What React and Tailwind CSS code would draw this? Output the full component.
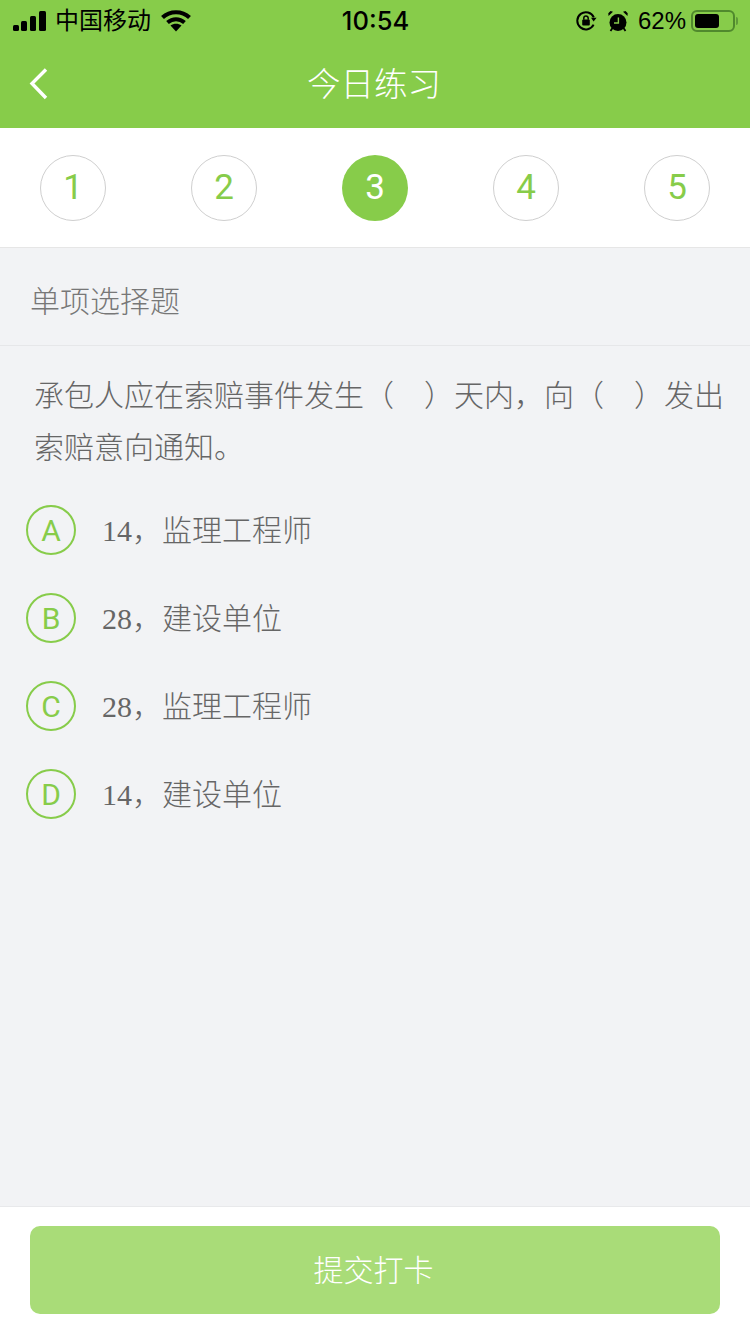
const steps = [1, 2, 3, 4, 5];
const current = 3;

const options = [
  { key: "A", num: "14", text: "监理工程师" },
  { key: "B", num: "28", text: "建设单位" },
  { key: "C", num: "28", text: "监理工程师" },
  { key: "D", num: "14", text: "建设单位" },
];

const cjk = "font-['Liberation_Sans','Noto_Sans_CJK_SC',sans-serif]";

const SignalIcon = () => (
  <svg width="34" height="22" viewBox="0 0 34 22" className="block">
    <rect x="0" y="15" width="6" height="6" rx="1.5" fill="#000" />
    <rect x="8" y="11" width="6" height="10" rx="1.5" fill="#000" />
    <rect x="17" y="6" width="6" height="15" rx="1.5" fill="#000" />
    <rect x="26" y="1" width="7" height="20" rx="1.5" fill="#000" />
  </svg>
);

const WifiIcon = () => (
  <svg width="30" height="22" viewBox="0 0 30 22" className="block">
    <path d="M1.500 7.500C9 .5 21 .5 28.500 7.500" fill="none" stroke="#000" strokeWidth="4.200" />
    <path d="M6.500 12.500c5-4.400 12-4.400 17 0" fill="none" stroke="#000" strokeWidth="4" />
    <path d="M9.500 15.600c3.200-2.400 7.800-2.400 11 0L15 21.500z" fill="#000" />
  </svg>
);

const LockRotateIcon = () => (
  <svg width="21" height="20" viewBox="0 0 21 20" className="block">
    <path d="M17.600 13.600A8.600 8.600 0 1 1 17.800 6.400" fill="none" stroke="#000" strokeWidth="2" />
    <path d="M15 6.800h5.600L17.600 10.600z" fill="#000" />
    <rect x="6.200" y="8.600" width="7.600" height="6" rx="1" fill="#000" />
    <path d="M7.800 8.800V7.200a2.200 2.200 0 0 1 4.400 0v1.600" fill="none" stroke="#000" strokeWidth="1.500" />
  </svg>
);

const AlarmIcon = () => (
  <svg width="20" height="21" viewBox="0 0 20 21" className="block">
    <circle cx="10" cy="11.500" r="8.500" fill="#000" />
    <path d="M.5 5 5 .8 2.500 0 .3 2.200zM19.500 5 15 .8l2.500-.8 2.200 2.200z" fill="#000" />
    <path d="M4.500 17l-2 3M15.500 17l2 3" fill="none" stroke="#000" strokeWidth="1.800" />
    <path d="M10.400 6.400v5.600H6" fill="none" stroke="#87cc4a" strokeWidth="1.400" />
  </svg>
);

const BatteryIcon = () => (
  <div className="flex items-center">
    <div className="w-[44px] h-[22px] rounded-[6px] border-2 border-[#50892d] p-[2px]">
      <div className="w-[24px] h-full rounded-[3px] bg-black" />
    </div>
    <div className="ml-[1px] w-[2px] h-[8px] rounded-r-sm bg-[#5f9a38]" />
  </div>
);

const App = () => {
  return (
    <div className={`${cjk} flex flex-col w-[750px] h-[1334px] bg-[#f2f3f5] overflow-hidden`}>
      <header className="h-[128px] bg-[#87cc4a] shrink-0">
        {/* status bar */}
        <div className="flex items-center h-[40px] pt-[2px] pl-[13px] pr-[12px] text-black">
          <div className="flex-1 flex items-center">
            <SignalIcon />
            <span className="ml-[8px] text-[24px] leading-none">中国移动</span>
            <span className="ml-[10px]">
              <WifiIcon />
            </span>
          </div>
          <span className="text-[25.500px] font-medium leading-none font-['Inter','Liberation_Sans',sans-serif]">10:54</span>
          <div className="flex-1 flex items-center justify-end">
            <LockRotateIcon />
            <span className="ml-[11px]">
              <AlarmIcon />
            </span>
            <span className="ml-[10px] text-[24px] leading-none">62%</span>
            <span className="ml-[5px]">
              <BatteryIcon />
            </span>
          </div>
        </div>

        {/* nav */}
        <div className="relative flex items-center justify-center h-[88px] pt-px pr-[2px]">
          <svg width="20" height="34" viewBox="0 0 20 34" className="absolute left-[29px] top-[27px]">
            <path d="M17 2.500 3 16.500l14 14.500" fill="none" stroke="#fff" strokeWidth="3.400" />
          </svg>
          <h1 className="text-[33.500px] font-light leading-none text-white">今日练习</h1>
        </div>
      </header>

      <div className="flex items-center justify-between h-[120px] shrink-0 px-[40px] pt-px bg-white border-b border-[#e6e6e6] font-['Roboto',sans-serif]">
        {steps.map((n) =>
          n === current ? (
            <div
              key={n}
              className="flex items-center justify-center w-[66px] h-[66px] pt-px rounded-full bg-[#87cc4a] text-[35px] text-white"
            >
              {n}
            </div>
          ) : (
            <div
              key={n}
              className="flex items-center justify-center w-[66px] h-[66px] pt-px rounded-full border border-[#cfcfcf] text-[35px] text-[#87cc4a]"
            >
              {n}
            </div>
          )
        )}
      </div>

      <div className="flex items-center h-[98px] shrink-0 pl-[30px] pt-[10px] border-b border-[#e6e7e9] text-[30px] font-light text-[#777]">
        单项选择题
      </div>

      <main className="flex-1">
        <p className="pt-[24px] pl-[34px] pr-[26px] text-[30px] font-light leading-[52px] text-[#666]">
          承包人应在索赔事件发生（　）天内，向（　）发出索赔意向通知。
        </p>
        <ul className="mt-[12px]">
          {options.map((o) => (
            <li key={o.key} className="flex items-center h-[88px] pl-[26px]">
              <span className="flex items-center justify-center w-[50px] h-[50px] pt-px rounded-full border-2 border-[#87cc4a] text-[30px] font-['Roboto',sans-serif] text-[#87cc4a]">
                {o.key}
              </span>
              <span className="ml-[26px] text-[30px] font-light text-[#666] font-['Liberation_Serif','Noto_Sans_CJK_SC',serif]">
                {o.num}，<span className={cjk}>{o.text}</span>
              </span>
            </li>
          ))}
        </ul>
      </main>

      <footer className="h-[128px] shrink-0 pt-[19px] px-[30px] bg-white border-t border-[#e8e9eb]">
        <button className="block w-full h-[88px] pr-[3px] rounded-[10px] bg-[#a9dc78] text-[30px] font-light text-white">
          提交打卡
        </button>
      </footer>
    </div>
  );
};

export default App;
